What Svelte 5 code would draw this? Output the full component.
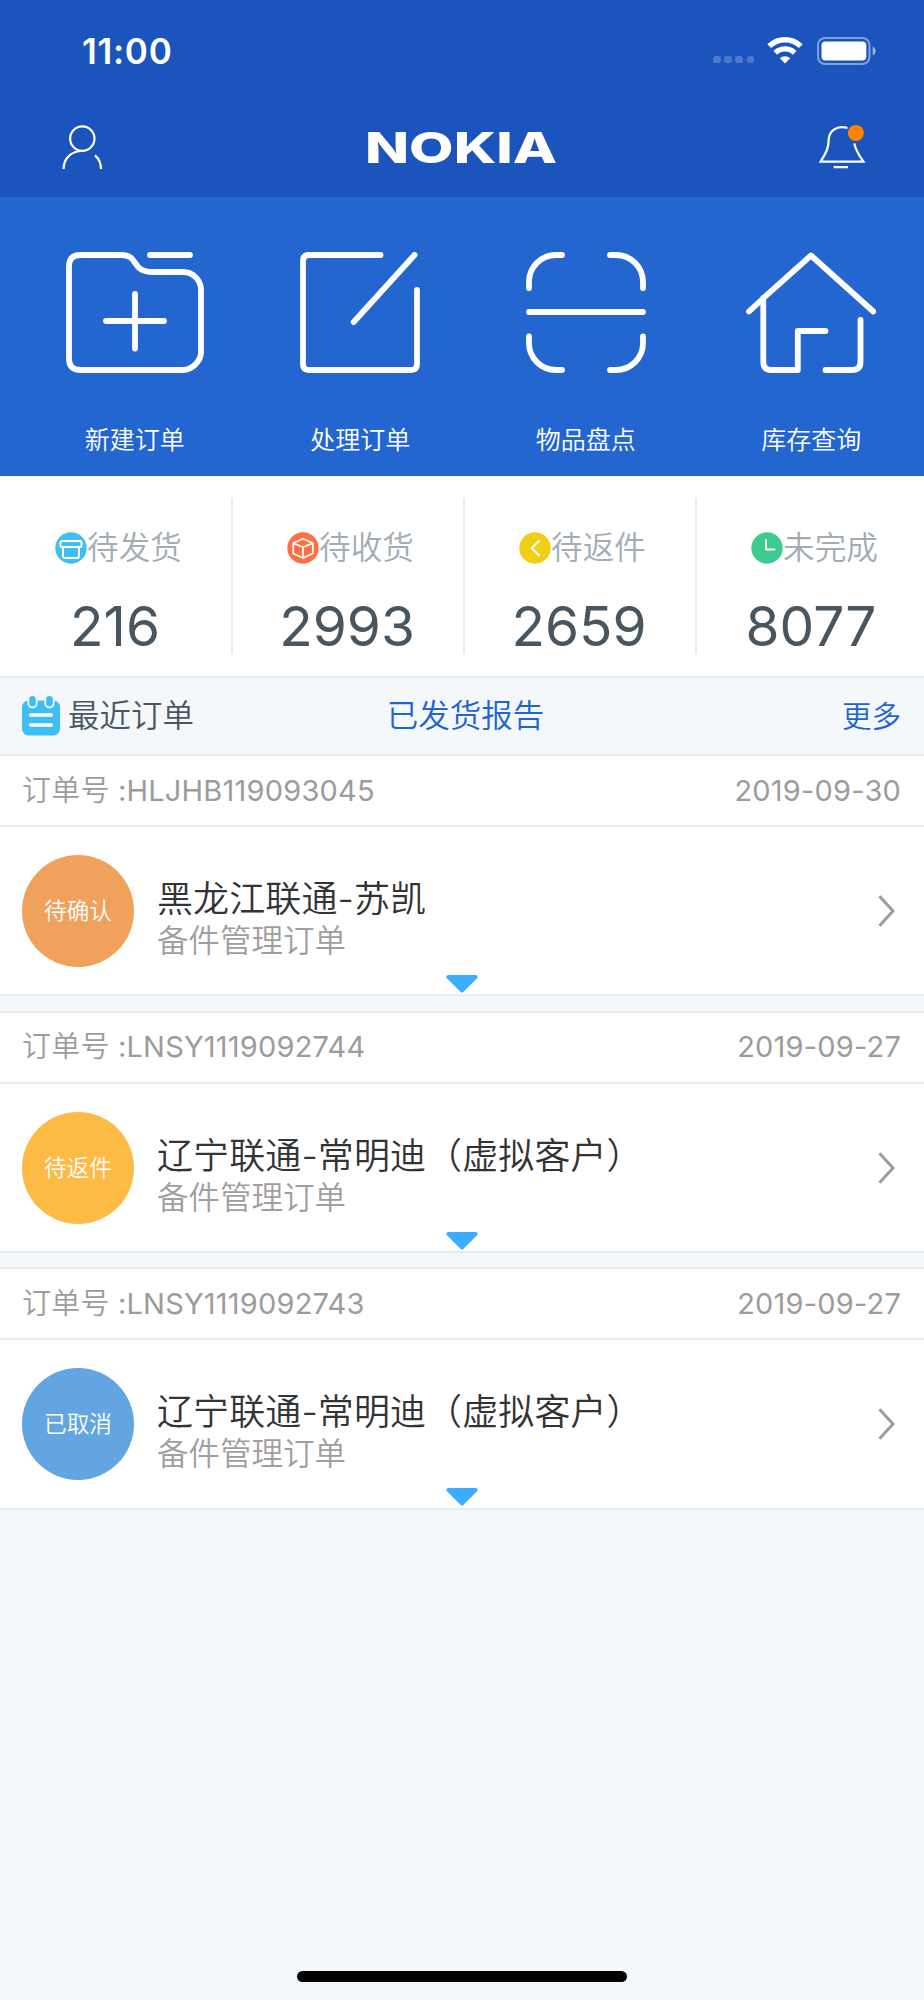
<script lang="ts">
  interface Stat {
    icon: string;
    color: string;
    label: string;
    value: number;
  }

  interface Order {
    no: string;
    date: string;
    status: string;
    color: string;
    customer: string;
    type: string;
  }

  const actions = [
    { icon: 'create', label: '新建订单' },
    { icon: 'edit', label: '处理订单' },
    { icon: 'scan', label: '物品盘点' },
    { icon: 'house', label: '库存查询' },
  ];

  const stats: Stat[] = [
    { icon: 'ship', color: '#3fbdf5', label: '待发货', value: 216 },
    { icon: 'box', color: '#ff6f43', label: '待收货', value: 2993 },
    { icon: 'back', color: '#f0cf15', label: '待返件', value: 2659 },
    { icon: 'clock', color: '#3ecb8e', label: '未完成', value: 8077 },
  ];

  const orders: Order[] = [
    {
      no: 'HLJHB119093045',
      date: '2019-09-30',
      status: '待确认',
      color: '#f0a25c',
      customer: '黑龙江联通-苏凯',
      type: '备件管理订单',
    },
    {
      no: 'LNSY1119092744',
      date: '2019-09-27',
      status: '待返件',
      color: '#fdba45',
      customer: '辽宁联通-常明迪（虚拟客户）',
      type: '备件管理订单',
    },
    {
      no: 'LNSY1119092743',
      date: '2019-09-27',
      status: '已取消',
      color: '#62a5e1',
      customer: '辽宁联通-常明迪（虚拟客户）',
      type: '备件管理订单',
    },
  ];
</script>

<div class="app">
  <header>
    <div class="status-bar">
      <span class="time">11:00</span>
      <div class="indicators">
        <div class="signal"><i></i><i></i><i></i><i></i></div>
        <svg class="wifi" width="36" height="27" viewBox="0 0 36 27" fill="none" stroke="#fff">
          <path d="M2.2 9.2a22.5 22.5 0 0 1 31.6 0" stroke-width="5.4" />
          <path d="M8.3 15.8a14 14 0 0 1 19.4 0" stroke-width="5.2" />
          <path d="M18 26.6l-5.2-5.3a7.4 7.4 0 0 1 10.4 0z" fill="#fff" stroke="none" />
        </svg>
        <svg width="60" height="28" viewBox="0 0 60 28">
          <rect x="1" y="1" width="51.5" height="26" rx="7" fill="none" stroke="#fff" stroke-opacity=".45" stroke-width="2" />
          <rect x="4.5" y="4.5" width="44.8" height="19" rx="4" fill="#fff" />
          <path d="M55.7 9.5c4 1.6 4 7.400 0 9z" fill="#fff" fill-opacity=".55" />
        </svg>
      </div>
    </div>
    <nav>
      <svg width="41" height="45" viewBox="0 0 41 45" fill="none" stroke="#fff" stroke-width="2.2">
        <circle cx="20.3" cy="13.6" r="12.2" />
        <path d="M1.600 44c0-11 8-18 18.700-18M33 30.300c4 3.500 6 8 6 13.700" />
      </svg>
      <svg class="logo" width="194" height="60" viewBox="-2 -13 194 60">
        <text x="-1" y="32.500" textLength="192" lengthAdjust="spacingAndGlyphs">NOKIA</text>
      </svg>
      <svg width="46" height="45" viewBox="0 0 46 45" fill="none" stroke="#fff" stroke-width="2.2">
        <path d="M28.500 3C17-.2 10 6.500 9.700 15c-.2 10-4.200 15-8.200 21.700h43c-4.200-6-8.200-12-9.200-18.400M14.700 42.200H29" />
        <circle cx="36.900" cy="8" r="8" fill="#ff8200" stroke="none" />
      </svg>
    </nav>
  </header>

  <section class="actions">
    {#each actions as action}
      <div class="action">
        {#if action.icon === 'create'}
          <svg width="138" height="121" viewBox="0 0 138 121">
            <path d="M14.500 3H55c19 0 9 17 32 17h30c10 0 18 8 18 18v62c0 9-9 18-18 18H14.500Q3 118 3 106.500v-92Q3 3 14.500 3z" />
            <path d="M84 3h40M40 69h58M69 42v54.500" />
          </svg>
        {:else if action.icon === 'edit'}
          <svg width="120" height="121" viewBox="0 0 120 121">
            <path d="M80.500 3H9Q3 3 3 9v103q0 6 6 6h102q6 0 6-6V38" />
            <path d="M114.500 3 53.700 70" />
          </svg>
        {:else if action.icon === 'scan'}
          <svg width="120" height="121" viewBox="0 0 120 121">
            <path d="M36 3h-6A27 27 0 0 0 3 30v6M84 3h6a27 27 0 0 1 27 27v6M3 60h114M36 118h-6A27 27 0 0 1 3 91v-6.500M84 118h6a27 27 0 0 0 27-27v-6.500" />
          </svg>
        {:else}
          <svg width="130" height="121" viewBox="0 0 130 121">
            <path d="M3 59.500 17.500 46 65 3.500l62.300 56" />
            <path d="M17.300 46v64q0 8 8 8h26.500V79H79.500M79.500 118H106q8.500 0 8.500-8V68" />
          </svg>
        {/if}
        <span>{action.label}</span>
      </div>
    {/each}
  </section>

  <section class="stats">
    {#each stats as stat}
      <div class="stat">
        <div class="stat-label">
          <svg width="32" height="32" viewBox="0 0 32 32" fill="none" stroke="#fff" stroke-width="2" stroke-linejoin="round">
            <circle cx="16" cy="16" r="15.700" fill={stat.color} stroke="none" />
            {#if stat.icon === 'ship'}
              <rect x="5.500" y="9" width="21" height="6" rx="1.500" />
              <path d="M8 15v9q0 2 2 2h12q2 0 2-2v-9" />
            {:else if stat.icon === 'box'}
              <path stroke-width="1.700" d="M16 6.800l9.800 4.200v10.500L16 26l-9.800-4.500V11zM6.200 11l9.800 4.200 9.800-4.200M16 15.200V26" />
            {:else if stat.icon === 'back'}
              <path stroke-linecap="round" d="M20 9l-7.300 7.200L20 23.200" />
            {:else}
              <path stroke-linecap="round" d="M15 8v9.500h8.500" />
            {/if}
          </svg>
          <span>{stat.label}</span>
        </div>
        <strong>{stat.value}</strong>
      </div>
    {/each}
  </section>

  <div class="section-bar">
    <div class="recent">
      <svg width="38" height="41" viewBox="0 0 38 41">
        <rect y="5.500" width="38" height="35" rx="6.500" fill="#3fbdf5" />
        <g fill="#3fbdf5" stroke="#f4f8fb" stroke-width="1.800">
          <rect x="6.300" y="0" width="8.400" height="12.500" rx="4.200" />
          <rect x="23.300" y="0" width="8.400" height="12.500" rx="4.200" />
        </g>
        <path d="M8.500 20h21M8.500 30h21" stroke="#fff" stroke-width="3.300" stroke-linecap="round" />
      </svg>
      <span>最近订单</span>
    </div>
    <span class="link report">已发货报告</span>
    <span class="link more">更多</span>
  </div>

  {#each orders as order}
    <article>
      <div class="order-head">
        <span><span class="caption">订单号</span> :{order.no}</span>
        <span>{order.date}</span>
      </div>
      <div class="order-body">
        <div class="badge" style:background={order.color}>{order.status}</div>
        <div class="info">
          <h3>{order.customer}</h3>
          <p>{order.type}</p>
        </div>
        <svg class="chevron" width="17" height="32" viewBox="0 0 17 32" fill="none" stroke="#9c9c9c" stroke-width="3">
          <path d="M1.500 1.300 15 16 1.500 30.700" />
        </svg>
        <svg class="expand" width="32" height="18" viewBox="0 0 32 18">
          <path d="M2.200 0h27.600q3 1 1.300 3.300L17.300 17q-1.300 1-2.600 0L.9 3.300Q-.8 1 2.200 0z" fill="#3badff" />
        </svg>
      </div>
    </article>
  {/each}

  <div class="home-indicator"></div>
</div>

<style>
  :global(body) {
    margin: 0;
  }

  .app {
    display: flex;
    flex-direction: column;
    width: 924px;
    height: 2000px;
    overflow: hidden;
    background: #f4f8fb;
    font-family: Inter, 'Noto Sans CJK SC', sans-serif;
    font-weight: 400;
  }

  svg {
    display: block;
    flex-shrink: 0;
  }

  header {
    height: 197px;
    background: #1a54bc;
    color: #fff;
  }

  .status-bar {
    display: flex;
    justify-content: space-between;
    align-items: center;
    height: 101px;
    padding: 0 47px 0 82px;
  }

  .time {
    font-size: 35px;
    font-weight: 600;
    letter-spacing: 0.7px;
  }

  .indicators {
    display: flex;
    align-items: center;
  }

  .signal {
    display: flex;
    gap: 3.600px;
    padding-top: 18px;
    margin-right: 13px;
  }

  .signal i {
    width: 7.500px;
    height: 7.500px;
    border-radius: 2.500px;
    background: rgba(255, 255, 255, 0.22);
  }

  .wifi {
    margin-right: 14px;
  }

  nav {
    display: flex;
    justify-content: space-between;
    align-items: center;
    height: 92px;
    padding: 0 59.500px 0 62px;
  }

  .logo text {
    font-size: 43px;
    font-weight: 800;
    fill: #fff;
  }

  .actions {
    display: flex;
    height: 279px;
    padding-left: 22px;
    box-sizing: border-box;
    background: #2466d0;
  }

  .action {
    flex: 1;
    display: flex;
    flex-direction: column;
    align-items: center;
    gap: 49px;
    padding-top: 55px;
    color: #fff;
    font-size: 25px;
    font-weight: 350;
    line-height: 36px;
  }

  .action svg {
    fill: none;
    stroke: #fff;
    stroke-width: 5.800;
    stroke-linecap: round;
    stroke-linejoin: round;
  }

  .stats {
    display: grid;
    grid-template-columns: repeat(4, 232px);
    height: 200px;
    padding: 22px 0 0 1px;
    box-sizing: border-box;
    background: #fff;
  }

  .stat {
    display: flex;
    flex-direction: column;
    align-items: center;
    height: 156px;
    border-right: 2px solid #ececec;
    box-sizing: border-box;
  }

  .stat-label {
    display: flex;
    align-items: center;
    padding: 27px 0 0 5px;
    color: #a3acb2;
    font-size: 31.600px;
    font-weight: 350;
    line-height: 46px;
  }

  .stat strong {
    padding: 21px 2px 0 0;
    color: #475660;
    font-size: 55px;
    font-weight: 400;
    line-height: 68px;
  }

  .section-bar {
    display: grid;
    grid-template-columns: 1fr auto 1fr;
    align-items: center;
    height: 79px;
    margin-bottom: -1px;
    padding: 0 23px 2px 22px;
    border-top: 2px solid #ebebeb;
    box-sizing: border-box;
    color: #475660;
    font-size: 31.500px;
    font-weight: 350;
    line-height: 46px;
  }

  .recent {
    display: flex;
    align-items: center;
    gap: 8px;
  }

  .link {
    color: #1f63d6;
  }

  .report {
    padding-left: 8px;
  }

  .more {
    text-align: right;
    font-size: 29.500px;
  }

  article {
    height: 242.200px;
    margin-bottom: 14.500px;
    border-top: 2px solid #ebebeb;
    border-bottom: 2px solid #ebebeb;
    box-sizing: border-box;
    background: #fff;
  }

  .order-head {
    display: flex;
    justify-content: space-between;
    align-items: center;
    height: 71px;
    padding: 0 23px 0 22px;
    border-bottom: 2px solid #ebebeb;
    box-sizing: border-box;
    color: #9c9c9c;
    font-size: 29px;
    letter-spacing: 0.2px;
    line-height: 42px;
  }

  .caption {
    font-weight: 350;
  }

  .order-body {
    position: relative;
    display: flex;
    align-items: center;
    height: 168px;
    padding: 0 29px 0 22px;
    box-sizing: border-box;
  }

  .badge {
    width: 112px;
    height: 112px;
    border-radius: 50%;
    color: #fff;
    font-size: 22.600px;
    font-weight: 350;
    line-height: 112px;
    text-align: center;
  }

  .info {
    flex: 1;
    padding: 16px 0 0 23px;
  }

  h3,
  p {
    margin: 0;
    font-weight: 350;
    white-space: nowrap;
  }

  h3 {
    color: #333;
    font-size: 36px;
    letter-spacing: 0.1px;
    line-height: 44px;
  }

  p {
    color: #9f9f9f;
    font-size: 31.500px;
    line-height: 40px;
  }

  .expand {
    position: absolute;
    left: 50%;
    bottom: 2px;
    transform: translateX(-50%);
  }

  .home-indicator {
    width: 330px;
    height: 11px;
    margin: auto auto 18px;
    border-radius: 6px;
    background: #000;
  }
</style>
